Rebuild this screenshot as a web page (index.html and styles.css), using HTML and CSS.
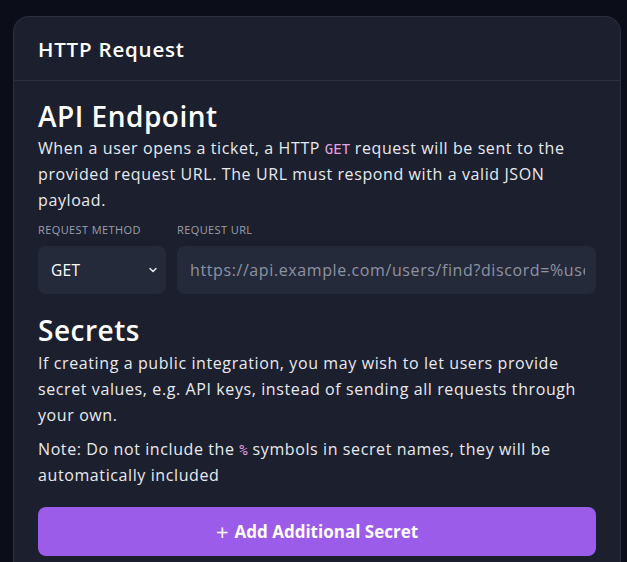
FILE: index.html
```html
<!DOCTYPE html>
<html>
<head>
<meta charset="utf-8">
<link rel="stylesheet" href="styles.css">
</head>
<body>
<div class="card">
  <div class="card-header">HTTP Request</div>
  <div class="card-body">
    <h2 class="heading">API Endpoint</h2>
    <p class="text">When a user opens a ticket, a HTTP <code class="code">GET</code> request will be sent to the provided request URL. The URL must respond with a valid JSON payload.</p>
    <div class="fields">
      <div class="field field-method">
        <label class="label">REQUEST METHOD</label>
        <div class="select">
          <span>GET</span>
          <svg class="chevron" width="10" height="10" viewBox="0 0 10 10"><path d="M2 3.5 L5 6.5 L8 3.5" fill="none" stroke="#e5e7eb" stroke-width="1.5" stroke-linecap="round" stroke-linejoin="round"/></svg>
        </div>
      </div>
      <div class="field field-url">
        <label class="label">REQUEST URL</label>
        <input class="input" type="text" placeholder="https://api.example.com/users/find?discord=%user_id%">
      </div>
    </div>
    <h2 class="heading heading-secrets">Secrets</h2>
    <p class="text">If creating a public integration, you may wish to let users provide secret values, e.g. API keys, instead of sending all requests through your own.</p>
    <p class="text note">Note: Do not include the <code class="code">%</code> symbols in secret names, they will be automatically included</p>
    <button class="button"><span class="plus">+</span><span>Add Additional Secret</span></button>
  </div>
</div>
</body>
</html>
```
FILE: styles.css
```css
* { box-sizing: border-box; }
html, body {
  margin: 0;
  padding: 0;
  background: #0b0e19;
  height: 100%;
  overflow: hidden;
}
body {
  font-family: "Open Sans", "Noto Sans", sans-serif;
  color: #eef0f4;
  padding: 16px 6px 0 13px;
}
.card {
  background: #1c1f2d;
  border: 1px solid #2b2f3e;
  border-bottom: none;
  border-radius: 16px 16px 0 0;
  height: 600px;
}
.card-header {
  height: 64px;
  padding: 0 24px;
  display: flex;
  align-items: center;
  font-size: 20.5px;
  font-weight: 600;
  letter-spacing: 0.8px;
  color: #ffffff;
  border-bottom: 1px solid #2b2f3e;
}
.card-body {
  padding: 16px 24px 0 24px;
}
.heading {
  margin: 0;
  font-size: 28px;
  line-height: 38px;
  font-weight: 600;
  letter-spacing: 0.5px;
  color: #ffffff;
}
.text {
  margin: 0;
  font-size: 16px;
  line-height: 26px;
  letter-spacing: 0.6px;
  color: #e8eaef;
}
.code {
  font-family: "DejaVu Sans Mono", monospace;
  font-size: 14px;
  line-height: 1;
  letter-spacing: 0;
  color: #e3a3e0;
}
.fields {
  display: flex;
  gap: 11px;
  margin-top: 9px;
}
.field {
  display: flex;
  flex-direction: column;
}
.field-method { width: 128px; }
.field-url { flex: 1; }
.label {
  font-size: 11px;
  line-height: 16px;
  color: #9ca0ab;
  margin-bottom: 8px;
  letter-spacing: 0.4px;
}
.select {
  height: 48px;
  background: #252a3b;
  border-radius: 8px;
  display: flex;
  align-items: center;
  justify-content: space-between;
  padding: 0 8px 0 13px;
  font-size: 15.5px;
  font-weight: 500;
  letter-spacing: 0.3px;
  color: #ffffff;
}
.chevron { display: block; }
.input {
  height: 48px;
  background: #252a3b;
  border: none;
  border-radius: 8px;
  padding: 0 11px 0 13px;
  font-family: inherit;
  font-size: 16px;
  letter-spacing: 0.6px;
  color: #ffffff;
  outline: none;
  width: 100%;
}
.input::placeholder { color: #8e93a1; opacity: 1; }
.heading-secrets { margin-top: 17px; }
.heading-secrets + .text { margin-top: 1px; }
.note { margin-top: 8px; }
.button {
  margin-top: 19px;
  width: 100%;
  height: 49px;
  border: none;
  border-radius: 8px;
  background: #9b5cea;
  color: #ffffff;
  font-family: inherit;
  font-size: 17px;
  font-weight: 700;
  letter-spacing: 0;
  display: flex;
  align-items: center;
  justify-content: center;
  gap: 6px;
}
.plus { font-size: 22px; font-weight: 500; line-height: 1; margin-top: -2px; }
```
